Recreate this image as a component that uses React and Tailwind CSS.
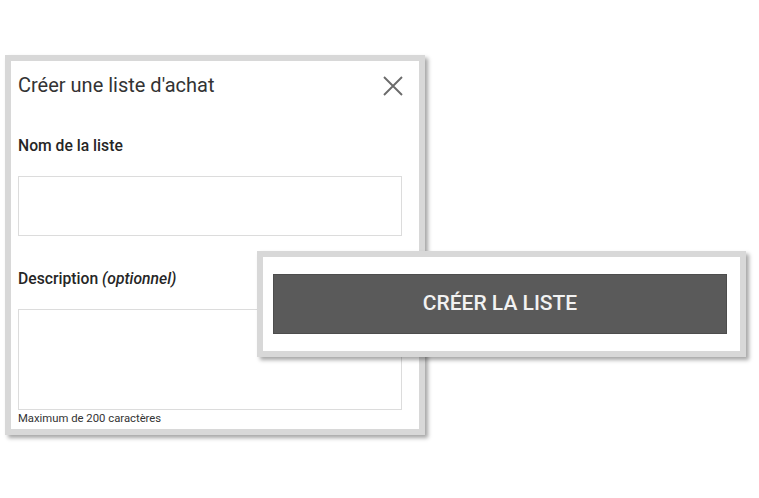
import React from "react";

const CloseIcon = () => (
  <svg width="20" height="20" viewBox="0 0 20 20" fill="none" stroke="#6b6b6b" strokeWidth="1.9">
    <path d="M1 1 L19 19 M19 1 L1 19" />
  </svg>
);

const App = () =>
{
  return (
    <div className="relative w-[759px] h-[498px] bg-white overflow-hidden font-['Roboto',sans-serif]">
      {/* Dialog */}
      <div className="ml-[5px] mt-[55px] w-[420px] h-[380px] border-[6px] border-[#d8d8d8] bg-white shadow-[3px_3px_4px_rgba(0,0,0,0.35)]">
        <div className="pl-[7px] pr-[17px]">
          <div className="flex items-center justify-between h-[46px] pt-[2px]">
            <h2 className="text-[20px] text-[#333] leading-none">Créer une liste d'achat</h2>
            <div className="mr-[-1px] mt-[2px]">
              <CloseIcon />
            </div>
          </div>

          <label className="block mt-[31px] text-[15.7px] font-medium text-[#262626] leading-none">
            Nom de la liste
          </label>
          <div className="mt-[22px] h-[60px] border border-[#dcdcdc]" />

          <label className="block mt-[35px] text-[15.7px] font-medium text-[#262626] leading-none">
            Description <span className="italic">(optionnel)</span>
          </label>
          <div className="mt-[23px] h-[101px] border border-[#dcdcdc]" />
          <p className="mt-[3px] text-[11.3px] text-[#333] leading-none">Maximum de 200 caractères</p>
        </div>
      </div>

      {/* Button card overlay */}
      <div className="absolute left-[257px] top-[251px] w-[489px] h-[106px] border-[6px] border-[#d8d8d8] bg-white shadow-[3px_3px_4px_rgba(0,0,0,0.35)] pl-[10px] pr-[13px] pt-[17px]">
        <button className="w-full h-[60px] bg-[#5a5a5a] text-[#f2f2f2] text-[21px] font-medium border border-[#4d4d4d]">
          CRÉER LA LISTE
        </button>
      </div>
    </div>
  );
};

export default App;
